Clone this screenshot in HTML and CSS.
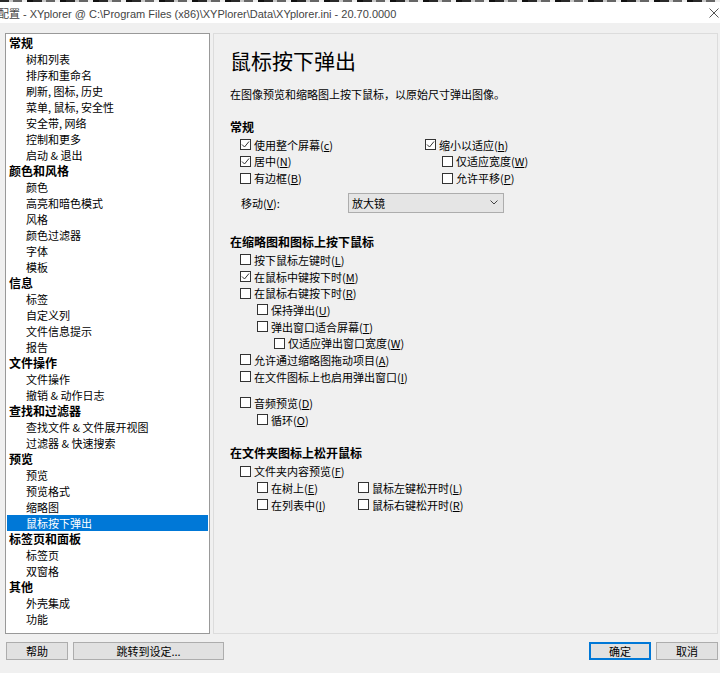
FILE: index.html
```html
<!DOCTYPE html>
<html lang="zh-CN">
<head>
  <meta charset="UTF-8" />
  <title>配置 - XYplorer</title>
  <link rel="stylesheet" href="styles.css">
</head>
<body>
  <div class="strip"></div>
  <div class="titlebar">
    <span class="title">配置 - XYplorer @ C:\Program Files (x86)\XYPlorer\Data\XYplorer.ini - 20.70.0000</span>
    <svg class="close" width="10" height="10" viewBox="0 0 10 10"><path d="M0.5 0.5L9.5 9.5M9.5 0.5L0.5 9.5" stroke="#555" stroke-width="1" fill="none"/></svg>
  </div>

  <div class="main">
    <div class="tree">
      <div class="node head">常规</div>
      <div class="node">树和列表</div>
      <div class="node">排序和重命名</div>
      <div class="node">刷新, 图标, 历史</div>
      <div class="node">菜单, 鼠标, 安全性</div>
      <div class="node">安全带, 网络</div>
      <div class="node">控制和更多</div>
      <div class="node">启动 &amp; 退出</div>
      <div class="node head">颜色和风格</div>
      <div class="node">颜色</div>
      <div class="node">高亮和暗色模式</div>
      <div class="node">风格</div>
      <div class="node">颜色过滤器</div>
      <div class="node">字体</div>
      <div class="node">模板</div>
      <div class="node head">信息</div>
      <div class="node">标签</div>
      <div class="node">自定义列</div>
      <div class="node">文件信息提示</div>
      <div class="node">报告</div>
      <div class="node head">文件操作</div>
      <div class="node">文件操作</div>
      <div class="node">撤销 &amp; 动作日志</div>
      <div class="node head">查找和过滤器</div>
      <div class="node">查找文件 &amp; 文件展开视图</div>
      <div class="node">过滤器 &amp; 快速搜索</div>
      <div class="node head">预览</div>
      <div class="node">预览</div>
      <div class="node">预览格式</div>
      <div class="node">缩略图</div>
      <div class="node sel">鼠标按下弹出</div>
      <div class="node head">标签页和面板</div>
      <div class="node">标签页</div>
      <div class="node">双窗格</div>
      <div class="node head">其他</div>
      <div class="node">外壳集成</div>
      <div class="node">功能</div>
    </div>

    <div class="panel">
      <h1>鼠标按下弹出</h1>
      <div class="desc">在图像预览和缩略图上按下鼠标，以原始尺寸弹出图像。</div>

      <div class="sec first">常规</div>
      <div class="cols">
        <div class="row"><span class="box on"><svg width="9" height="9" viewBox="0 0 9 9"><path d="M1 4.5L3.5 7L8 1.5" stroke="#333" fill="none"/></svg></span>使用整个屏幕(<u>c</u>)</div>
        <div class="row right"><span class="box on"><svg width="9" height="9" viewBox="0 0 9 9"><path d="M1 4.5L3.5 7L8 1.5" stroke="#333" fill="none"/></svg></span>缩小以适应(<u>h</u>)</div>
        <div class="row"><span class="box on"><svg width="9" height="9" viewBox="0 0 9 9"><path d="M1 4.5L3.5 7L8 1.5" stroke="#333" fill="none"/></svg></span>居中(<u>N</u>)</div>
        <div class="row right sub"><span class="box"></span>仅适应宽度(<u>W</u>)</div>
        <div class="row"><span class="box"></span>有边框(<u>B</u>)</div>
        <div class="row right sub"><span class="box"></span>允许平移(<u>P</u>)</div>
      </div>
      <div class="move">
        <span class="move-label">移动(<u>V</u>):</span>
        <div class="combo">
          <span>放大镜</span>
          <svg width="8" height="5" viewBox="0 0 8 5"><path d="M0.5 0.5L4 4L7.5 0.5" stroke="#444" fill="none"/></svg>
        </div>
      </div>

      <div class="sec second">在缩略图和图标上按下鼠标</div>
      <div class="row"><span class="box"></span>按下鼠标左键时(<u>L</u>)</div>
      <div class="row"><span class="box on"><svg width="9" height="9" viewBox="0 0 9 9"><path d="M1 4.5L3.5 7L8 1.5" stroke="#333" fill="none"/></svg></span>在鼠标中键按下时(<u>M</u>)</div>
      <div class="row"><span class="box"></span>在鼠标右键按下时(<u>R</u>)</div>
      <div class="row lv1"><span class="box"></span>保持弹出(<u>U</u>)</div>
      <div class="row lv1"><span class="box"></span>弹出窗口适合屏幕(<u>T</u>)</div>
      <div class="row lv2"><span class="box"></span>仅适应弹出窗口宽度(<u>W</u>)</div>
      <div class="row"><span class="box"></span>允许通过缩略图拖动项目(<u>A</u>)</div>
      <div class="row"><span class="box"></span>在文件图标上也启用弹出窗口(<u>I</u>)</div>
      <div class="row gap"><span class="box"></span>音频预览(<u>D</u>)</div>
      <div class="row lv1"><span class="box"></span>循环(<u>O</u>)</div>

      <div class="sec third">在文件夹图标上松开鼠标</div>
      <div class="row"><span class="box"></span>文件夹内容预览(<u>F</u>)</div>
      <div class="cols2">
        <div class="row"><span class="box"></span>在树上(<u>E</u>)</div>
        <div class="row"><span class="box"></span>鼠标左键松开时(<u>L</u>)</div>
        <div class="row"><span class="box"></span>在列表中(<u>I</u>)</div>
        <div class="row"><span class="box"></span>鼠标右键松开时(<u>R</u>)</div>
      </div>
    </div>
  </div>

  <div class="footer">
    <div class="btn">帮助</div>
    <div class="btn wide">跳转到设定...</div>
    <div class="btn def">确定</div>
    <div class="btn">取消</div>
  </div>
</body>
</html>
```

FILE: styles.css
```css
* {
  box-sizing: border-box;
}

body {
  margin: 0;
  width: 720px;
  height: 673px;
  overflow: hidden;
  background: #f0f0f0;
  color: #000;
  font-family: "Noto Sans CJK SC", "Noto Sans", sans-serif;
  font-size: 11px;
}

/* desktop behind the window */
.strip {
  height: 2px;
  background: repeating-linear-gradient(90deg, #2a2a2a 0 9px, #c8c8c8 9px 13px, #666 13px 22px, #eee 22px 27px, #111 27px 33px);
}

.titlebar {
  height: 21px;
  background: #fff;
  display: flex;
  align-items: center;
  justify-content: space-between;
  padding-right: 1px;
}

.title {
  margin-left: -2px;
  font-family: "Liberation Sans", "Noto Sans CJK SC", sans-serif;
  font-size: 11px;
  color: #444;
  white-space: nowrap;
}

.main {
  display: flex;
  gap: 3px;
  height: 611px;
  padding: 10px 2px 0 5px;
}

/* left navigation tree */
.tree {
  width: 205px;
  height: 601px;
  flex: none;
  background: #fff;
  border: 1px solid #999;
  padding: 1px;
}

.node {
  height: 16px;
  line-height: 16px;
  padding-left: 19px;
  white-space: nowrap;
}

.node.head {
  font-weight: bold;
  font-size: 12px;
  padding-left: 2px;
}

.node.sel {
  background: #0078d7;
  color: #fff;
}

/* right settings page */
.panel {
  flex: 1;
  border: 1px solid #dcdcdc;
  padding: 14px 16px 0 16px;
}

.panel h1 {
  margin: 0;
  font-size: 21px;
  line-height: 24px;
  font-weight: normal;
}

.desc {
  margin-top: 14px;
  line-height: 16px;
}

.sec {
  font-weight: bold;
  font-size: 12px;
  line-height: 16px;
  margin-bottom: 2px;
}

.sec.first {
  margin-top: 16.5px;
}

.sec.second {
  margin-top: 20.7px;
}

.sec.third {
  margin-top: 17px;
}

.row {
  height: 16.67px;
  display: flex;
  align-items: center;
  padding-left: 10px;
  white-space: nowrap;
}

.row.lv1 {
  padding-left: 27px;
}

.row.lv2 {
  padding-left: 44px;
}

.row.gap {
  margin-top: 9.7px;
}

.box {
  width: 11px;
  height: 11px;
  flex: none;
  margin-right: 3px;
  border: 1px solid #333;
  background: #fff;
  display: flex;
  align-items: center;
  justify-content: center;
}

.cols {
  display: grid;
  grid-template-columns: 195px 1fr;
}

.cols .row.right {
  padding-left: 0;
}

.cols .row.right.sub {
  padding-left: 17px;
}

.cols2 {
  display: grid;
  grid-template-columns: 101px 1fr;
  padding-left: 27px;
}

.cols2 .row {
  padding-left: 0;
}

.move {
  display: flex;
  align-items: center;
  height: 20px;
  margin-top: 6.5px;
  padding-left: 11px;
}

.move-label {
  width: 107px;
}

.combo {
  width: 156px;
  height: 20px;
  border: 1px solid #adadad;
  background: #e5e5e5;
  display: flex;
  align-items: center;
  justify-content: space-between;
  padding: 0 5px 0 3px;
}

/* bottom buttons */
.footer {
  display: flex;
  gap: 5px;
  padding: 8px 2px 0 6px;
}

.btn {
  width: 62px;
  height: 18px;
  border: 1px solid #adadad;
  background: #e1e1e1;
  text-align: center;
  line-height: 16px;
}

.btn.wide {
  width: 151px;
}

.btn.def {
  margin-left: auto;
  border: 2px solid #0078d7;
  line-height: 14px;
}
```
